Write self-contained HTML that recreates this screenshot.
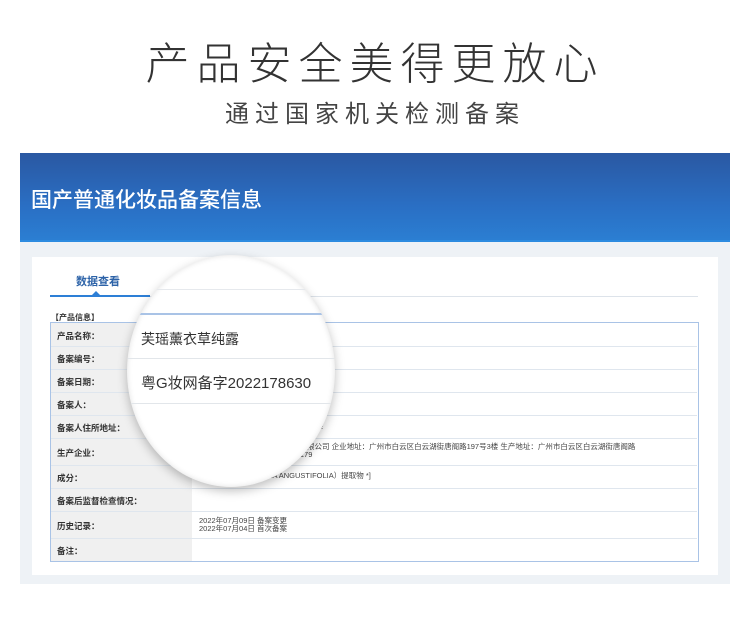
<!DOCTYPE html>
<html><head><meta charset="utf-8"><style>
*{margin:0;padding:0;box-sizing:border-box}
body{width:750px;height:624px;background:#fff;position:relative;overflow:hidden;font-family:"Liberation Sans","Noto Sans CJK SC",sans-serif;color:#333}
.a{position:absolute;white-space:nowrap}
.row{position:absolute;left:51px;width:646px;border-top:1px solid #dfe6ee}
.lab{position:absolute;left:51px;width:141px;background:#f0f0f0}
.l{position:absolute;left:57px;font-size:8.5px;font-weight:bold;color:#333}
.v{position:absolute;left:199px;font-size:7.5px;color:#444;line-height:8px}
</style></head><body>
<div class="a" style="left:0;width:750px;top:28px;text-align:center;font-size:44px;letter-spacing:7px;color:#333;font-weight:300">产品安全美得更放心</div>
<div class="a" style="left:0;width:750px;top:94px;text-align:center;font-size:24px;letter-spacing:6px;color:#444">通过国家机关检测备案</div>
<div class="a" style="left:20px;top:153px;width:710px;height:89px;background:linear-gradient(180deg,#2a58a2 0%,#2a6fc4 60%,#2b7fd3 100%)"></div>
<div class="a" style="left:20px;top:240px;width:710px;height:2px;background:#2d8be0"></div>
<div class="a" style="left:31px;top:184px;font-size:21px;color:#fff;font-weight:500">国产普通化妆品备案信息</div>
<div class="a" style="left:20px;top:242px;width:710px;height:342px;background:#eef2f6"></div>
<div class="a" style="left:32px;top:257px;width:686px;height:318px;background:#fff"></div>
<div class="a" style="left:76px;top:273px;font-size:11px;color:#2d63a8;font-weight:bold">数据查看</div>
<div class="a" style="left:50px;top:296px;width:648px;height:1px;background:#dde3ea"></div>
<div class="a" style="left:50px;top:295px;width:100px;height:2px;background:#2d7fd6"></div>
<div class="a" style="left:92px;top:291px;width:0;height:0;border-left:4px solid transparent;border-right:4px solid transparent;border-bottom:4px solid #2d7fd6"></div>
<div class="a" style="left:51px;top:312px;font-size:8px;font-weight:bold">【产品信息】</div>
<div class="a" style="left:50px;top:322px;width:649px;height:240px;border:1px solid #a9c3e6"></div>
<div class="lab" style="top:323px;height:238px"></div>
<div class="row" style="top:346px"></div><div class="row" style="top:369px"></div><div class="row" style="top:392px"></div><div class="row" style="top:415px"></div><div class="row" style="top:438px"></div><div class="row" style="top:465px"></div><div class="row" style="top:488px"></div><div class="row" style="top:511px"></div><div class="row" style="top:538px"></div>
<div class="l" style="top:330px">产品名称：</div>
<div class="l" style="top:353px">备案编号：</div>
<div class="l" style="top:376px">备案日期：</div>
<div class="l" style="top:399px">备案人：</div>
<div class="l" style="top:422px">备案人住所地址：</div>
<div class="l" style="top:447px">生产企业：</div>
<div class="l" style="top:472px">成分：</div>
<div class="l" style="top:495px">备案后监督检查情况：</div>
<div class="l" style="top:520px">历史记录：</div>
<div class="l" style="top:545px">备注：</div>
<div class="v" style="top:422px;left:300px">7号3楼</div>
<div class="v" style="top:443px;left:262px">化妆品制造有限公司 企业地址：广州市白云区白云湖街唐阁路197号3楼 生产地址：广州市白云区白云湖街唐阁路</div>
<div class="v" style="top:451px;left:199px">197　　　　可证：粤妆20190179</div>
<div class="v" style="top:472px">[*薰衣草（LAVANDULA ANGUSTIFOLIA）提取物 *]</div>
<div class="v" style="top:517px">2022年07月09日 备案变更<br>2022年07月04日 首次备案</div>
<div class="a" style="left:127px;top:255px;width:208px;height:232px;border-radius:50%;background:#fff;box-shadow:0 4px 10px rgba(0,0,0,.25),inset 0 0 6px rgba(0,0,0,.12);overflow:hidden">
<div class="a" style="left:0;top:58px;width:208px;height:2px;background:#a9c3e6"></div>
<div class="a" style="left:0;top:103px;width:208px;height:1px;background:#e2e6ea"></div>
<div class="a" style="left:0;top:148px;width:208px;height:1px;background:#e2e6ea"></div>
<div class="a" style="left:0;top:34px;width:208px;height:1px;background:#e6e9ed"></div>
<div class="a" style="left:14px;top:74px;font-size:14px;color:#333">芙瑶薰衣草纯露</div>
<div class="a" style="left:14px;top:117px;font-size:15px;color:#333">粤G妆网备字2022178630</div>
</div>
</body></html>
